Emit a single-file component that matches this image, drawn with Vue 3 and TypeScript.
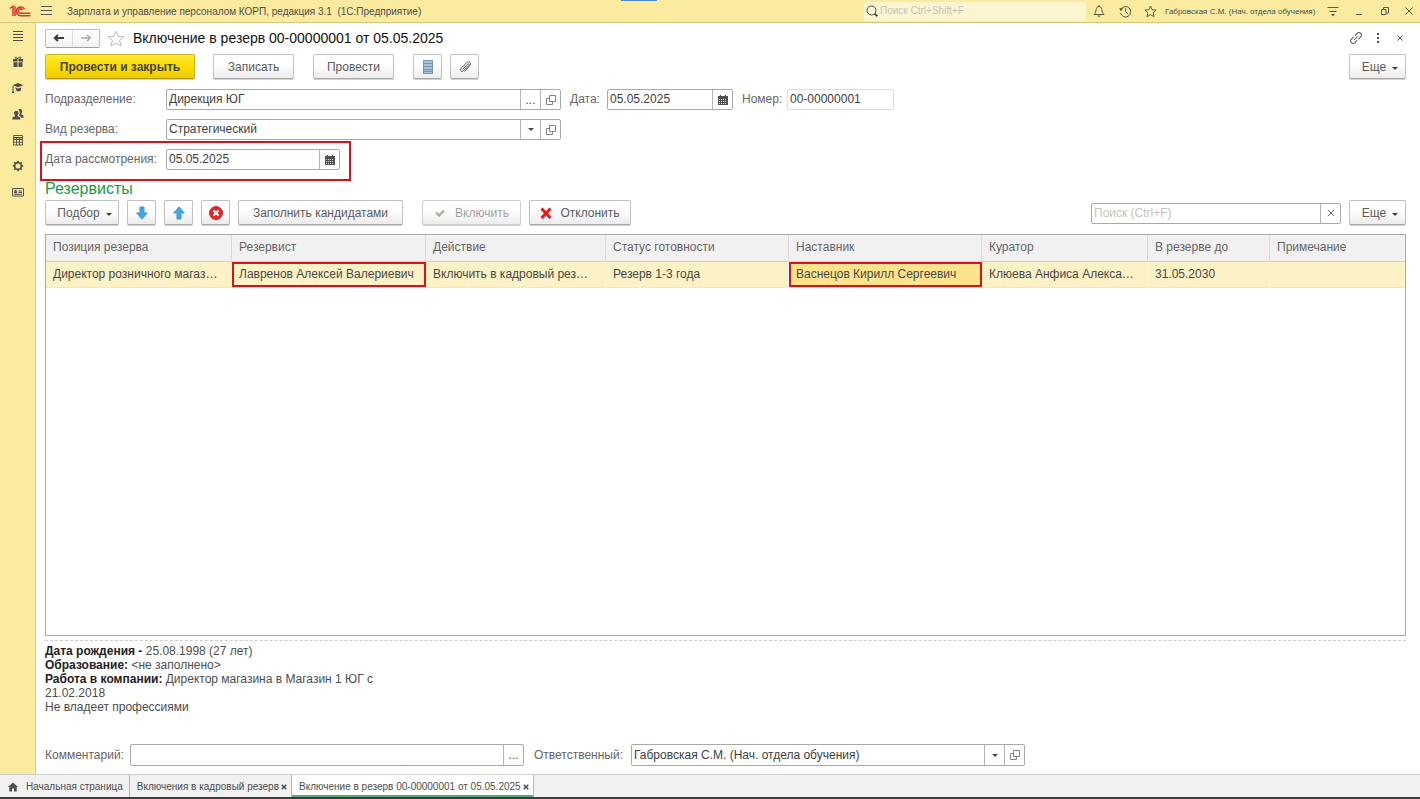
<script setup lang="ts">
import { ref } from 'vue'

interface Column {
  title: string
  width: number
}

interface Cell {
  text: string
  marked?: boolean
  active?: boolean
}

const columns: Column[] = [
  { title: 'Позиция резерва', width: 186 },
  { title: 'Резервист', width: 194 },
  { title: 'Действие', width: 180 },
  { title: 'Статус готовности', width: 183 },
  { title: 'Наставник', width: 193 },
  { title: 'Куратор', width: 166 },
  { title: 'В резерве до', width: 122 },
  { title: 'Примечание', width: 135 },
]

const rows: Cell[][] = [
  [
    { text: 'Директор розничного магаз…' },
    { text: 'Лавренов Алексей Валериевич', marked: true },
    { text: 'Включить в кадровый рез…' },
    { text: 'Резерв 1-3 года' },
    { text: 'Васнецов Кирилл Сергеевич', marked: true, active: true },
    { text: 'Клюева Анфиса Алекса…' },
    { text: '31.05.2030' },
    { text: '' },
  ],
]

const department = ref('Дирекция ЮГ')
const reserveKind = ref('Стратегический')
const documentDate = ref('05.05.2025')
const documentNumber = ref('00-00000001')
const reviewDate = ref('05.05.2025')
const comment = ref('')
const responsible = ref('Габровская С.М. (Нач. отдела обучения)')
const globalSearch = ref('')
const listSearch = ref('')
</script>

<template>
  <div class="app">
    <header class="topbar">
      <svg class="logo" viewBox="0 0 22 14" width="22" height="14" aria-label="1С">
        <path d="M1 4.5 4 2.2V12" />
        <path d="M6 2.2V12" />
        <path d="M15.600 5.200A4.400 4.400 0 1 0 11.600 11.700H21.500" />
        <path d="M13.600 6.300A2.200 2.200 0 1 0 11.800 9.300H21.500" />
      </svg>
      <button class="plain menu" aria-label="Главное меню">
        <svg viewBox="0 0 12 10" width="12" height="10"><path class="line" d="M0 .5h11M0 4.500h11M0 8.500h11" /></svg>
      </button>
      <span class="app-title">Зарплата и управление персоналом КОРП, редакция 3.1&nbsp; (1С:Предприятие)</span>
      <span class="accent"></span>
      <label class="global-search">
        <svg viewBox="0 0 12 12" width="12" height="12"><circle class="dark" cx="5.500" cy="5.500" r="4.500" /><path class="dark thick" d="m8.800 8.800 2.400 2.400" /></svg>
        <input v-model="globalSearch" type="text" placeholder="Поиск Ctrl+Shift+F" aria-label="Поиск Ctrl+Shift+F" />
      </label>
      <button class="plain t-bell" aria-label="Уведомления">
        <svg viewBox="0 0 12 14" width="12" height="14"><path class="line" d="M1 10.500h10C9.300 8.800 9.100 7.500 8.800 5.500 8.500 3.500 7.500 2.500 6 2.500S3.500 3.500 3.200 5.500C2.900 7.500 2.700 8.800 1 10.500ZM6 1v1.500" /><path class="fill" d="M4.300 11.500h3.400L6 13.300Z" /></svg>
      </button>
      <button class="plain t-hist" aria-label="История">
        <svg viewBox="0 0 13 13" width="13" height="13"><path class="line" d="M2 4.200A5.200 5.200 0 1 1 1.500 8M6.700 3.200v3.600l2.500 2" /><path class="fill" d="M.3 3.200 4.300 3.300 1.600 6.300Z" /></svg>
      </button>
      <button class="plain t-star" aria-label="Избранное">
        <svg viewBox="0 0 13 13" width="13" height="13"><path class="line" d="m6.500 1 1.600 3.700 4 .4-3 2.700.9 3.900-3.500-2-3.500 2 .9-3.900-3-2.700 4-.4Z" /></svg>
      </button>
      <span class="user">Габровская С.М. (Нач. отдела обучения)</span>
      <button class="plain t-set" aria-label="Настройки">
        <svg viewBox="0 0 12 12" width="12" height="12"><path class="line" d="M.5 2.500h11M2.500 6.500h7" /><path class="fill" d="M4 9h4L6 11.200Z" /></svg>
      </button>
      <button class="plain t-min" aria-label="Свернуть">
        <svg viewBox="0 0 8 12" width="8" height="12"><path class="line" d="M1 9.500h6" /></svg>
      </button>
      <button class="plain t-max" aria-label="Развернуть">
        <svg viewBox="0 0 8 8" width="8" height="8"><path class="line" d="M.5 2.500h4.500v5H.5ZM2.500 2.500v-2h5v5.500h-2.500" /></svg>
      </button>
      <button class="plain t-close" aria-label="Закрыть приложение">
        <svg viewBox="0 0 8 8" width="8" height="8"><path class="line" d="m.5.5 7 7M7.500.5l-7 7" /></svg>
      </button>
    </header>

    <div class="body">
      <nav class="sidebar" aria-label="Разделы">
        <button class="plain" aria-label="Главное">
          <svg viewBox="0 0 12 12" width="12" height="12"><path class="bars" d="M1 1.500h10M1 4.500h10M1 7.500h10M1 10.500h10" /></svg>
        </button>
        <button class="plain" aria-label="Льготы">
          <svg viewBox="0 0 12 12" width="12" height="12"><path class="fill" d="M1 3h4.500v2.500H1ZM6.500 3H11v2.500H6.500ZM1.500 6.300h4V11h-4ZM6.500 6.300h4V11h-4Z" /><path class="bars" d="M5.500 3C4 3 3 2.300 3.200 1.500S5 1 5.700 2.800C6.500 1 8.500.7 8.800 1.500S8 3 6.500 3" /></svg>
        </button>
        <button class="plain" aria-label="Обучение">
          <svg viewBox="0 0 12 12" width="12" height="12"><path class="fill" d="M.5 3.200 6 1l5.500 2.200L6 5.200ZM3.500 5.500l2.500 1 3-1C9.700 8 8.500 9.500 6.500 9.500 4.500 9.500 3.500 8 3.500 5.500ZM.5 4h1v4.500l.7 2.500H0l.5-2.500Z" /></svg>
        </button>
        <button class="plain" aria-label="Кадры">
          <svg viewBox="0 0 12 12" width="12" height="12"><path class="fill" d="M8 1c1.500 0 2.200 1 2.200 2.300 0 1-.3 1.800-.9 2.200v.8l2.200 1.200v2.300H9.200C8.700 8.300 7 7.500 7 7.500c.7-1 .9-2 .7-3.500C7.500 2.700 7 2.300 6.200 2 6.500 1.300 7.200 1 8 1ZM4.300 2.800c1.500 0 2.200 1 2.200 2.400 0 1-.3 1.800-.9 2.200v.8L8.300 9.500V11.500H.4v-2l2.600-1.300v-.8c-.6-.4-.9-1.200-.9-2.200 0-1.400.7-2.400 2.200-2.400Z" /></svg>
        </button>
        <button class="plain" aria-label="Расчёты">
          <svg viewBox="0 0 12 12" width="12" height="12"><path class="line" d="M1.500 1.500h9v9.500h-9ZM1.500 5.500h9M1.500 8.200h9M4.500 4v7M7.500 4v7" /><path class="fill" d="M1.500 3h9v1.300h-9Z" /></svg>
        </button>
        <button class="plain" aria-label="Настройка">
          <svg viewBox="0 0 12 12" width="12" height="12"><circle class="gear" cx="6" cy="6" r="3.300" /><path class="gear" d="M6 .7v2M6 9.300v2M.7 6h2M9.300 6h2M2.300 2.300l1.300 1.300M8.400 8.400l1.300 1.300M2.300 9.700l1.300-1.300M8.400 3.600l1.300-1.300" /></svg>
        </button>
        <button class="plain" aria-label="Карточки">
          <svg viewBox="0 0 12 12" width="12" height="12"><path class="line" d="M.5 2.500h11v7.500H.5ZM6.500 5h3.500M6.500 6.500h3.500M2 8.300h8" /><path class="fill" d="M2.800 3.800h1.700v1.700h.7v1.700H2V5.500h.8Z" /></svg>
        </button>
      </nav>

      <main class="form">
        <div class="title-row">
          <div class="history">
            <button aria-label="Назад"><svg viewBox="0 0 12 8" width="12" height="8"><path class="arrow" d="M11 4H2M5 1 1.800 4 5 7" /></svg></button>
            <button aria-label="Вперёд"><svg viewBox="0 0 12 8" width="12" height="8"><path class="arrow pale" d="M1 4h9M7 1l3.200 3L7 7" /></svg></button>
          </div>
          <button class="plain fav" aria-label="В избранное">
            <svg viewBox="0 0 18 17" width="18" height="17"><path d="m9 1.200 2.200 5.100 5.800.4-4.400 3.700 1.500 5.600L9 13l-5.100 3 1.500-5.600L1 6.700l5.800-.4Z" /></svg>
          </button>
          <h1>Включение в резерв 00-00000001 от 05.05.2025</h1>
          <span class="spacer"></span>
          <button class="plain w-link" aria-label="Ссылка">
            <svg viewBox="0 0 14 14" width="14" height="14"><g transform="rotate(-45 7 7)"><path class="line" d="M6 4.500H3a2.500 2.500 0 0 0 0 5H6M8 4.500h3a2.500 2.500 0 0 1 0 5H8M4.500 7h5" /></g></svg>
          </button>
          <button class="plain w-more" aria-label="Действия">
            <svg viewBox="0 0 4 10" width="4" height="10"><path class="fill" d="M1 0h2v2H1ZM1 4h2v2H1ZM1 8h2v2H1Z" /></svg>
          </button>
          <button class="plain w-close" aria-label="Закрыть">
            <svg viewBox="0 0 8 8" width="8" height="8"><path class="line" d="m1.500 1.500 5 5M6.500 1.500l-5 5" /></svg>
          </button>
        </div>

        <div class="toolbar main-tools">
          <button class="btn primary">Провести и закрыть</button>
          <button class="btn save">Записать</button>
          <button class="btn post">Провести</button>
          <button class="btn icon" aria-label="Движения документа">
            <svg viewBox="0 0 12 14" width="12" height="14"><path d="M1.500.5h9v13h-9Z" fill="#a9c4da" stroke="#7397b3" /><path d="M1.500 3.500h9M1.500 6.500h9M1.500 9.500h9M1.500 11.500h9" stroke="#6f94b0" /></svg>
          </button>
          <button class="btn icon" aria-label="Присоединенные файлы">
            <svg viewBox="0 0 14 14" width="14" height="14"><path class="line" d="m4.300 9.600 5.300-5.400c.9-.9 2.100.3 1.200 1.200L5.400 10.800c-1.700 1.700-4.100-.7-2.400-2.400l5.500-5.600c2.500-2.500 5.500.5 3.100 3L6.500 11.500" /></svg>
          </button>
          <span class="spacer"></span>
          <button class="btn more">Еще <i class="caret"></i></button>
        </div>

        <div class="fields">
          <div class="field-row">
            <label class="caption" for="department">Подразделение:</label>
            <div class="field wide">
              <input id="department" v-model="department" type="text" />
              <button aria-label="Выбрать подразделение" class="dots">...</button>
              <button aria-label="Открыть подразделение"><svg viewBox="0 0 10 10" width="10" height="10"><path class="open" d="M3.500.5h6v6h-6ZM3.500 3.500h-3v6h6v-3" /></svg></button>
            </div>
            <label class="date-label" for="doc-date">Дата:</label>
            <div class="field date">
              <input id="doc-date" v-model="documentDate" type="text" />
              <button aria-label="Календарь"><svg viewBox="0 0 10 10" width="10" height="10"><path class="fill" d="M0 1h2V0h1v1h4V0h1v1h2v9H0Z" /><path class="grid" d="M1 4.500h8M1 6.500h8M1 8.500h8" /></svg></button>
            </div>
            <label class="number-label" for="doc-number">Номер:</label>
            <div class="field number"><input id="doc-number" v-model="documentNumber" type="text" readonly /></div>
          </div>

          <div class="field-row">
            <label class="caption" for="kind">Вид резерва:</label>
            <div class="field wide">
              <div class="select">
                <select id="kind" v-model="reserveKind"><option>Стратегический</option></select>
                <span class="drop"><i class="caret"></i></span>
              </div>
              <button aria-label="Открыть вид резерва"><svg viewBox="0 0 10 10" width="10" height="10"><path class="open" d="M3.500.5h6v6h-6ZM3.500 3.500h-3v6h6v-3" /></svg></button>
            </div>
          </div>

          <div class="field-row review">
            <label class="caption" for="review">Дата рассмотрения:</label>
            <div class="field review-date">
              <input id="review" v-model="reviewDate" type="text" />
              <button aria-label="Календарь"><svg viewBox="0 0 10 10" width="10" height="10"><path class="fill" d="M0 1h2V0h1v1h4V0h1v1h2v9H0Z" /><path class="grid" d="M1 4.500h8M1 6.500h8M1 8.500h8" /></svg></button>
            </div>
          </div>
        </div>

        <h2>Резервисты</h2>

        <div class="toolbar list-tools">
          <button class="btn pick">Подбор <i class="caret"></i></button>
          <button class="btn icon" aria-label="Переместить вниз">
            <svg viewBox="0 0 12 14" width="12" height="14"><path class="blue" d="M4 1h4v6h3.300L6 13 .7 7H4Z" /></svg>
          </button>
          <button class="btn icon" aria-label="Переместить вверх">
            <svg viewBox="0 0 12 14" width="12" height="14"><path class="blue" d="M4 13h4V7h3.300L6 1 .7 7H4Z" /></svg>
          </button>
          <button class="btn icon" aria-label="Удалить">
            <svg viewBox="0 0 14 14" width="14" height="14"><circle cx="7" cy="7" r="6.500" fill="#dc2b2b" stroke="#c92828" /><path d="m4.500 4.500 5 5M9.500 4.500l-5 5" stroke="#fff" stroke-width="2" /></svg>
          </button>
          <button class="btn fill-list">Заполнить кандидатами</button>
          <button class="btn include" disabled>
            <svg viewBox="0 0 12 12" width="12" height="12"><path d="m2 5.500 3 3L10 3.500" fill="none" stroke="#a3b39c" stroke-width="2.400" /></svg>Включить
          </button>
          <button class="btn reject">
            <svg viewBox="0 0 12 12" width="12" height="12"><path d="m1.500 1.500 9 9.500M10.500 1.500 1.500 11" fill="none" stroke="#f5141c" stroke-width="3" /></svg>Отклонить
          </button>
          <span class="spacer"></span>
          <div class="field search">
            <input v-model="listSearch" type="text" placeholder="Поиск (Ctrl+F)" aria-label="Поиск (Ctrl+F)" />
            <button aria-label="Очистить"><svg viewBox="0 0 8 8" width="8" height="8"><path class="cross" d="m1 1 6 6M7 1 1 7" /></svg></button>
          </div>
          <button class="btn more">Еще <i class="caret"></i></button>
        </div>

        <div class="list">
          <table>
            <colgroup><col v-for="c in columns" :key="c.title" :style="{ width: c.width + 'px' }" /></colgroup>
            <thead>
              <tr><th v-for="c in columns" :key="c.title" scope="col">{{ c.title }}</th></tr>
            </thead>
            <tbody>
              <tr v-for="(row, r) in rows" :key="r">
                <td v-for="(cell, i) in row" :key="i" :class="{ marked: cell.marked, active: cell.active }">
                  <div>{{ cell.text }}</div>
                </td>
              </tr>
            </tbody>
          </table>
        </div>

        <section class="details">
          <p><b>Дата рождения - </b>25.08.1998 (27 лет)</p>
          <p><b>Образование: </b>&lt;не заполнено&gt;</p>
          <p><b>Работа в компании: </b>Директор магазина в Магазин 1 ЮГ с<br />21.02.2018</p>
          <p>Не владеет профессиями</p>
        </section>

        <div class="field-row bottom">
          <label class="comment-label" for="comment">Комментарий:</label>
          <div class="field comment">
            <input id="comment" v-model="comment" type="text" />
            <button aria-label="Изменить комментарий" class="dots">...</button>
          </div>
          <label class="resp-label" for="resp">Ответственный:</label>
          <div class="field resp">
            <div class="select">
              <select id="resp" v-model="responsible"><option>Габровская С.М. (Нач. отдела обучения)</option></select>
              <span class="drop"><i class="caret"></i></span>
            </div>
            <button aria-label="Открыть ответственного"><svg viewBox="0 0 10 10" width="10" height="10"><path class="open" d="M3.500.5h6v6h-6ZM3.500 3.500h-3v6h6v-3" /></svg></button>
          </div>
        </div>
      </main>
    </div>

    <footer class="tabs">
      <div class="tab home">
        <button class="plain">
          <svg viewBox="0 0 10 10" width="10" height="10"><path class="fill" d="M5 .5 10 5H8.700v4.500H6V6.500H4v3H1.300V5H0Z" /></svg>Начальная страница
        </button>
      </div>
      <div class="tab">
        <button class="plain">Включения в кадровый резерв</button>
        <button class="plain" aria-label="Закрыть вкладку"><svg viewBox="0 0 6 6" width="6" height="6"><path class="cross bold" d="m.7.7 4.600 4.600M5.300.7.7 5.300" /></svg></button>
      </div>
      <div class="tab current">
        <button class="plain">Включение в резерв 00-00000001 от 05.05.2025</button>
        <button class="plain" aria-label="Закрыть вкладку"><svg viewBox="0 0 6 6" width="6" height="6"><path class="cross bold" d="m.7.7 4.600 4.600M5.300.7.7 5.300" /></svg></button>
      </div>
    </footer>
  </div>
</template>

<style>
body {
  margin: 0;
  background: #fff;
}
</style>

<style scoped>
.app {
  display: flex;
  flex-direction: column;
  min-height: 100vh;
  box-sizing: border-box;
  font: 12px/14px "Liberation Sans", Arial, sans-serif;
  color: #4d4d4d;
}
button, input, select {
  font: inherit;
  color: inherit;
  margin: 0;
}
svg { display: block; flex: none; }
.plain {
  display: flex;
  align-items: center;
  justify-content: center;
  padding: 0;
  border: 0;
  background: none;
}
.spacer { flex: 1; }
.line { fill: none; stroke: #5a5a50; stroke-width: 1; }
.dark { fill: none; stroke: #444; stroke-width: 1; }
.thick { stroke-width: 2; }
.fill { fill: #4f4f4f; }
.bars { fill: none; stroke: #4a4a4a; stroke-width: 1; }
.gear { fill: none; stroke: #4a4a4a; stroke-width: 1.500; }
.grid { fill: none; stroke: #ddd; stroke-width: 1; stroke-dasharray: 1 1; }
.open { fill: none; stroke: #858585; stroke-width: 1; }
.cross { fill: none; stroke: #666; stroke-width: 1; }
.cross.bold { stroke: #4a4a4a; stroke-width: 1.500; }
.blue { fill: #3fa9e8; stroke: #3a96d0; stroke-width: 1; }

.topbar {
  position: relative;
  display: flex;
  align-items: center;
  height: 22px;
  padding: 0 7px 0 9px;
  background: #fbeb9e;
  border-bottom: 1px solid #d6c87c;
  font-size: 10px;
}
.logo { fill: none; stroke: #d9372c; }
.logo path { stroke-width: 1.500; }
.menu { width: 12px; margin-left: 10px; }
.app-title { margin-left: 14px; padding-top: 1px; white-space: nowrap; }
.accent {
  position: absolute;
  top: 0;
  left: 621px;
  width: 36px;
  height: 1px;
  background: #4a86d8;
}
.global-search {
  display: flex;
  align-items: center;
  gap: 2px;
  width: 220px;
  height: 19px;
  margin-left: auto;
  padding-left: 2px;
  border-radius: 2px;
  background: #fdf5d0;
}
.global-search input {
  flex: 1;
  min-width: 0;
  padding: 0;
  border: 0;
  outline: 0;
  background: none;
}
input::placeholder { color: #c4c4bc; opacity: 1; }
.t-bell { width: 26px; }
.t-hist { width: 26px; }
.t-star { width: 24px; }
.user { min-width: 153px; margin-left: 3px; padding-top: 1px; font-size: 8px; white-space: nowrap; }
.t-set { width: 26px; margin-left: 2px; }
.t-min { width: 26px; }
.t-max { width: 25px; }
.t-close { width: 24px; margin-right: -8px; }

.body { display: flex; flex: 1; }
.sidebar {
  display: flex;
  flex-direction: column;
  flex: none;
  width: 35px;
  background: #fbeb9e;
  border-right: 1px solid #d6c87c;
}
.sidebar .plain { height: 26px; }

.form {
  display: flex;
  flex-direction: column;
  flex: 1;
  min-width: 0;
  padding: 0 14px 8px 9px;
}
.title-row { display: flex; align-items: center; height: 30px; }
.history {
  display: flex;
  box-sizing: border-box;
  width: 55px;
  height: 19px;
  border: 1px solid #bcbcbc;
  border-bottom-color: #a0a0a0;
  border-radius: 2px;
  background: linear-gradient(#fff, #f2f2f2);
}
.history button {
  display: flex;
  align-items: center;
  justify-content: center;
  flex: 1;
  padding: 0;
  border: 0;
  background: none;
}
.history button + button { border-left: 1px solid #ddd; }
.arrow { fill: none; stroke: #3c3c3c; stroke-width: 2; }
.arrow.pale { stroke: #aaa; stroke-width: 1.500; }
.fav { margin-left: 7px; }
.fav path { fill: #fff; stroke: #b9bec4; stroke-width: 1; }
h1 { margin: 0 0 0 8px; font-size: 14px; font-weight: 400; line-height: 18px; color: #111; }
.w-link { width: 20px; }
.w-more { width: 24px; }
.w-close { width: 20px; margin-right: -4px; }

.toolbar { display: flex; align-items: center; }
.main-tools { margin-top: 1px; }
.btn {
  display: flex;
  align-items: center;
  justify-content: center;
  box-sizing: border-box;
  height: 25px;
  margin-bottom: 1px;
  padding: 0 12px;
  border: 1px solid #c0c0c0;
  border-bottom-color: #a8a8a8;
  border-radius: 2px;
  box-shadow: 0 1px #d0d0d0;
  background: linear-gradient(#fff 40%, #ececec);
  color: #5a5a5a;
  white-space: nowrap;
}
.btn.primary {
  width: 150px;
  border-color: #cdb31a;
  border-bottom-color: #b39a10;
  background: linear-gradient(#ffe935, #fedc00 50%, #eccc00);
  color: #444;
  font-weight: 700;
}
.save { width: 81px; margin-left: 18px; }
.post { width: 81px; margin-left: 19px; }
.icon { width: 29px; padding: 0; margin-left: 8px; }
.post + .icon { margin-left: 19px; }
.more { width: 57px; gap: 6px; padding: 0 0 0 5px; }
.caret {
  width: 0;
  height: 0;
  border: 3px solid transparent;
  border-top-color: #444;
  border-bottom: 0;
}
.btn .caret { margin-top: 4px; }

.fields { display: flex; flex-direction: column; gap: 9px; margin-top: 9px; }
.field-row { display: flex; align-items: center; }
.field-row label { padding-bottom: 1px; white-space: nowrap; color: #666; }
.caption { width: 121px; }
.field {
  display: flex;
  box-sizing: border-box;
  height: 21px;
  border: 1px solid #a9a9a9;
  border-radius: 2px;
  background: #fff;
}
.field input, .field select {
  flex: 1;
  min-width: 0;
  box-sizing: border-box;
  padding: 0 2px 1px;
  border: 0;
  outline: 0;
  background: none;
  color: #404040;
}
.field > button, .drop {
  display: flex;
  align-items: center;
  justify-content: center;
  box-sizing: border-box;
  width: 20px;
  padding: 0;
  border: 0;
  border-left: 1px solid #b5b5b5;
  background: none;
}
.select { display: grid; flex: 1; min-width: 0; }
.select > * { grid-area: 1 / 1; }
.field select { appearance: none; width: 100%; }
.drop { justify-self: end; pointer-events: none; }
.wide { width: 395px; }
.date-label { margin-left: 9px; width: 37px; }
.date { width: 126px; }
.number-label { margin-left: 9px; width: 45px; }
.field.number { width: 107px; border-color: #ddd; }
.review { position: relative; align-self: flex-start; }
.review::after {
  content: "";
  position: absolute;
  inset: -8px -11px -11px -5px;
  border: 2px solid #d5121e;
  pointer-events: none;
}
.review-date { width: 174px; }

h2 { margin: 10px 0 2px; font-size: 16px; font-weight: 400; line-height: 18px; color: #1a9a46; }
.pick { width: 74px; gap: 6px; padding: 0 0 0 5px; }
.fill-list { width: 165px; margin-left: 8px; }
.btn.include { width: 99px; margin-left: 19px; gap: 9px; border-color: #d0d0d0; color: #a0a0a0; }
.reject { width: 102px; margin-left: 8px; gap: 8px; }
.search { width: 250px; margin-right: 8px; }

.list {
  flex: 1;
  margin-top: 8px;
  border: 1px solid #a9a9a9;
  background: #fff;
}
table { width: 100%; table-layout: fixed; border-collapse: separate; border-spacing: 0; }
th {
  box-sizing: border-box;
  height: 27px;
  padding: 0 7px 2px;
  border-right: 1px solid #d8d8d8;
  border-bottom: 1px solid #cfcfcf;
  background: #f1f1f1;
  font-weight: 400;
  text-align: left;
  color: #666;
}
td {
  position: relative;
  box-sizing: border-box;
  height: 26px;
  padding: 0 7px 2px;
  border-right: 1px solid #fff;
  border-bottom: 1px solid #e5e5e5;
  background: #fdf1c6;
  color: #484848;
}
th:last-child, td:last-child { border-right: 0; }
td div { overflow: hidden; text-overflow: ellipsis; white-space: nowrap; }
td.active { background: #fde48c; }
td.marked::after {
  content: "";
  position: absolute;
  inset: 0 -1px 0 0;
  border: 2px solid #d5121e;
}

.details {
  min-height: 70px;
  margin-top: 4px;
  padding-top: 3px;
  border-top: 1px dashed #ccc;
}
.details p { margin: 0; }
.details b { color: #222; }
.bottom { margin-top: 30px; }
.comment-label { width: 85px; }
.comment { width: 394px; height: 22px; }
.resp-label { width: 97px; margin-left: 10px; }
.resp { width: 394px; height: 22px; }

.tabs {
  display: flex;
  height: 22px;
  border-top: 1px solid #d0d0d0;
  border-bottom: 2px solid #3c3c3c;
  background: #f1f1f1;
  font-size: 10px;
}
.tab {
  display: flex;
  align-items: center;
  gap: 2px;
  padding: 0 4px 0 7px;
  border-right: 1px solid #b5b5b5;
}
.tab .plain { padding-top: 1px; white-space: nowrap; gap: 8px; }
.home { padding: 0 6px 0 8px; }
.current { background: #fff; box-shadow: inset 0 -2px #5aa878; }
</style>
